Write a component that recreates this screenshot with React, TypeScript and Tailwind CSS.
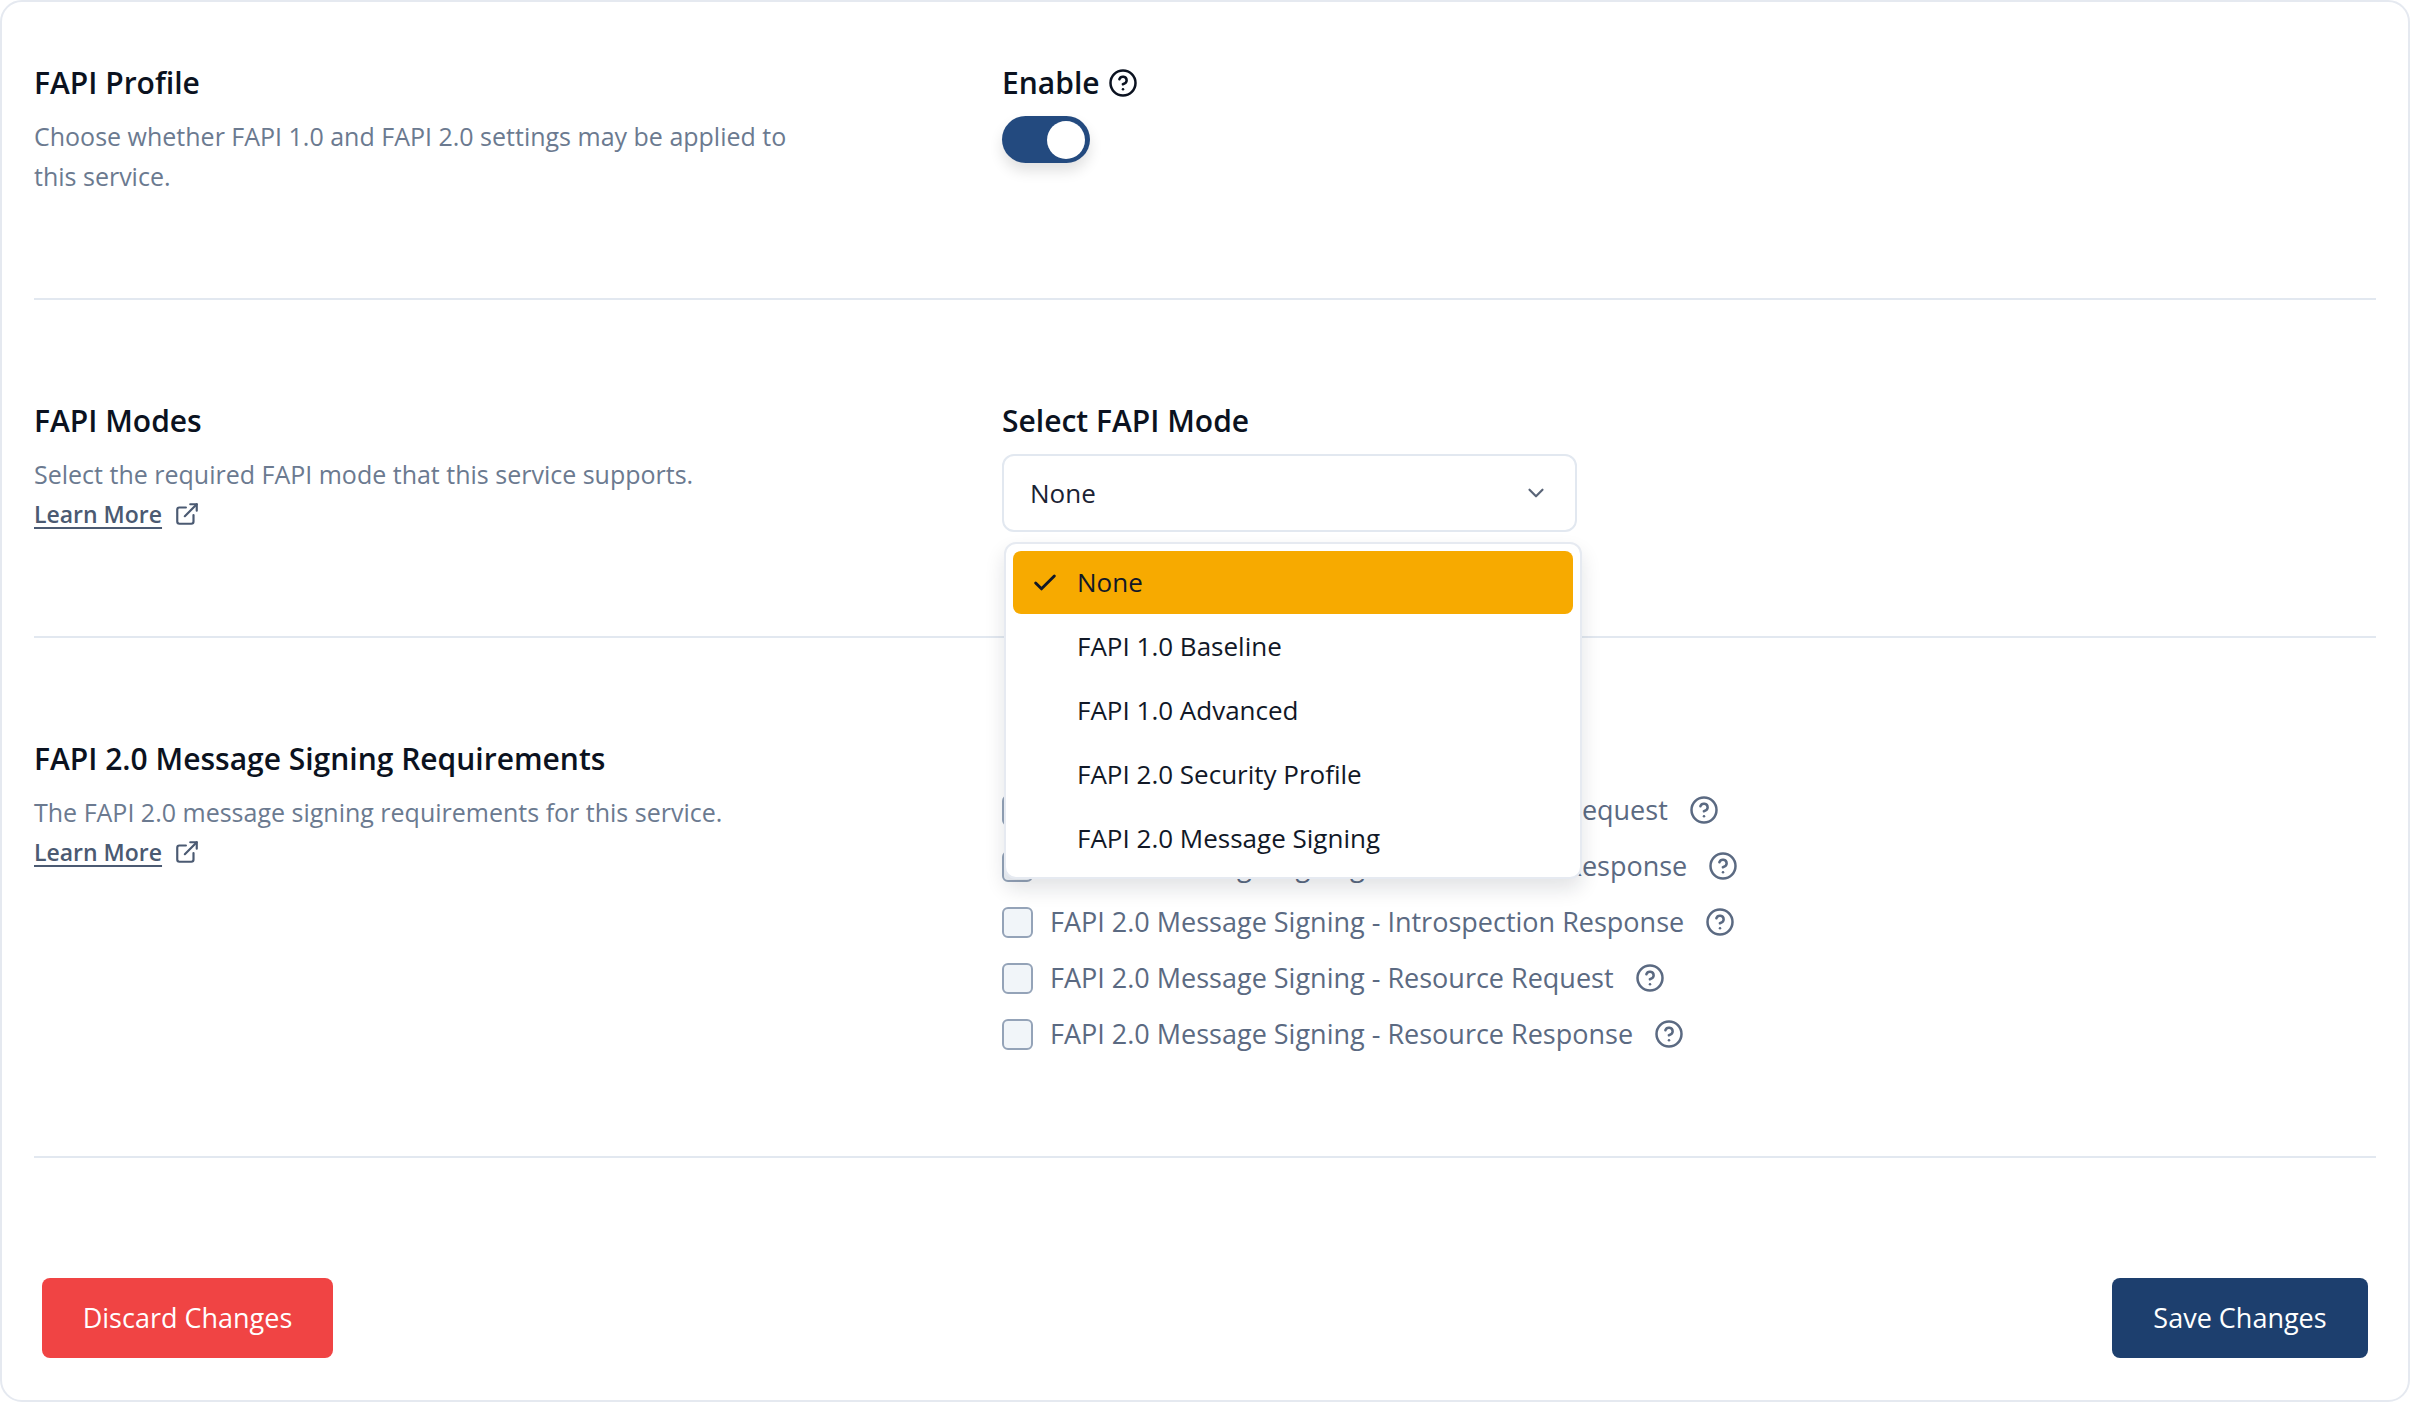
import { Check, ChevronDown, CircleHelp, ExternalLink } from 'lucide-react';

const font = { fontFamily: '"Open Sans", "Noto Sans", sans-serif' };

const modes = ['None', 'FAPI 1.0 Baseline', 'FAPI 1.0 Advanced', 'FAPI 2.0 Security Profile', 'FAPI 2.0 Message Signing'];

const signing = [
  'FAPI 2.0 Message Signing - Authorization Request',
  'FAPI 2.0 Message Signing - Authorization Response',
  'FAPI 2.0 Message Signing - Introspection Response',
  'FAPI 2.0 Message Signing - Resource Request',
  'FAPI 2.0 Message Signing - Resource Response',
];

const LearnMore = () => (
  <a className="inline-flex items-center gap-3 text-[23px] leading-[40px] font-semibold text-[#4b5a72] underline underline-offset-4">
    Learn More
    <ExternalLink className="w-[26px] h-[26px]" strokeWidth={2} />
  </a>
);

const App = () => {
  return (
    <div style={font} className="w-[2410px] h-[1402px] bg-white border-2 border-[#e5e9f0] rounded-[22px] flex flex-col">
      <div className="px-[32px]">
        {/* FAPI Profile */}
        <section className="grid grid-cols-[968px_1fr] pt-[62px] pb-[102px] border-b-2 border-[#e2e8f0]">
          <div>
            <h2 className="text-[30px] leading-[38px] font-semibold text-[#0b1220]">FAPI Profile</h2>
            <p className="mt-[14px] text-[25px] leading-[40px] text-[#6b7a90] w-[760px]">
              Choose whether FAPI 1.0 and FAPI 2.0 settings may be applied to this service.
            </p>
          </div>
          <div>
            <div className="flex items-center gap-2 text-[30px] leading-[38px] font-semibold text-[#0b1220]">
              Enable <CircleHelp className="w-[30px] h-[30px]" strokeWidth={2} />
            </div>
            <div className="mt-[14px] w-[88px] h-[47px] rounded-full bg-[#234a7f] flex items-center justify-end pr-[5px] shadow-[0_8px_14px_rgba(0,0,0,0.12)]">
              <div className="w-[38px] h-[38px] rounded-full bg-white" />
            </div>
          </div>
        </section>

        {/* FAPI Modes */}
        <section className="grid grid-cols-[968px_1fr] pt-[102px] pb-[102px] border-b-2 border-[#e2e8f0]">
          <div>
            <h2 className="text-[30px] leading-[38px] font-semibold text-[#0b1220]">FAPI Modes</h2>
            <p className="mt-[14px] text-[25px] leading-[40px] text-[#6b7a90]">
              Select the required FAPI mode that this service supports.
            </p>
            <LearnMore />
          </div>
          <div className="relative">
            <div className="text-[30px] leading-[38px] font-semibold text-[#0b1220]">Select FAPI Mode</div>
            <div className="mt-[14px] w-[575px] h-[78px] border-2 border-[#e2e8f0] rounded-[12px] flex items-center justify-between pl-[26px] pr-[26px] text-[26px] text-[#1a2233]">
              None
              <ChevronDown className="w-[26px] h-[26px] text-[#5a6578]" strokeWidth={2} />
            </div>
            <div className="absolute z-10 left-[2px] top-[140px] w-[578px] bg-white border-2 border-[#e6eaf1] rounded-[12px] shadow-[0_10px_20px_rgba(15,23,42,0.12)] p-[7px] flex flex-col gap-[1px]">
              {modes.map((m, i) => (
                <div
                  key={m}
                  className={`h-[63px] rounded-[8px] flex items-center text-[26px] text-[#111827] ${i === 0 ? 'bg-[#f7aa00]' : ''}`}
                >
                  <div className="w-[64px] flex justify-center">
                    {i === 0 && <Check className="w-[28px] h-[28px]" strokeWidth={2.5} />}
                  </div>
                  {m}
                </div>
              ))}
            </div>
          </div>
        </section>

        {/* Message signing */}
        <section className="grid grid-cols-[968px_1fr] pt-[102px] pb-[94px] border-b-2 border-[#e2e8f0]">
          <div>
            <h2 className="text-[30px] leading-[38px] font-semibold text-[#0b1220]">FAPI 2.0 Message Signing Requirements</h2>
            <p className="mt-[14px] text-[25px] leading-[40px] text-[#6b7a90]">
              The FAPI 2.0 message signing requirements for this service.
            </p>
            <LearnMore />
          </div>
          <div>
            <div className="invisible text-[30px] leading-[38px] font-semibold text-[#0b1220]">Message Signing</div>
            <div className="mt-[4px] flex flex-col">
              {signing.map((s) => (
                <label key={s} className="h-[56px] flex items-center gap-[17px] text-[27px] font-medium text-[#5b6a82]">
                  <span className="w-[31px] h-[31px] rounded-[6px] border-2 border-[#94a3b8] bg-[#f1f5f9]" />
                  {s}
                  <CircleHelp className="w-[30px] h-[30px] ml-1" strokeWidth={2} />
                </label>
              ))}
            </div>
          </div>
        </section>
      </div>

      <div className="flex justify-between px-[40px] pt-[120px]">
        <button className="h-[80px] w-[291px] rounded-[8px] bg-[#f04444] text-white text-[27px]">Discard Changes</button>
        <button className="h-[80px] w-[256px] rounded-[8px] bg-[#1d3f6e] text-white text-[27px]">Save Changes</button>
      </div>
    </div>
  );
};

export default App;
